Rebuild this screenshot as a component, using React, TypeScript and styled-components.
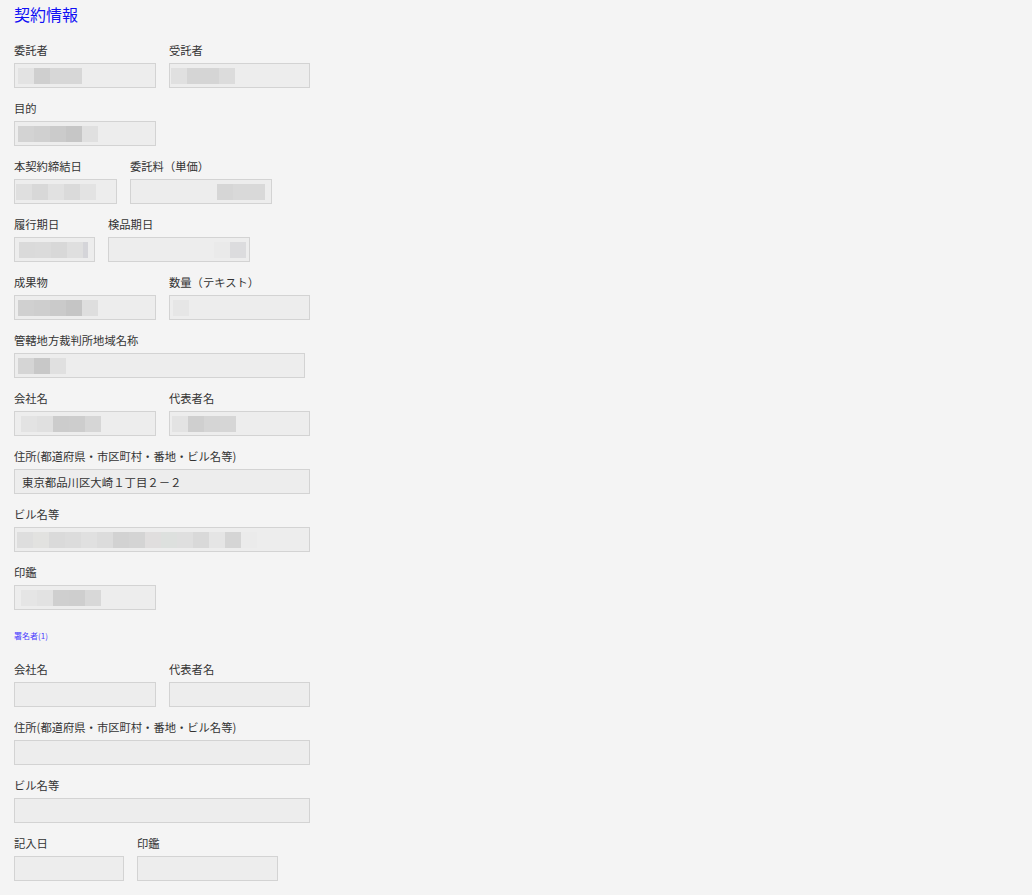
import React from "react";
import styled, { createGlobalStyle } from "styled-components";

const GlobalStyle = createGlobalStyle`
  html, body {
    margin: 0;
    padding: 0;
    background: #f4f4f4;
  }
  body {
    min-height: 100vh;
    font-family: "Noto Sans CJK JP", "Noto Sans", sans-serif;
    color: #333;
  }
`;

const Page = styled.div`
  padding: 2px 14px 12px;
`;

const Title = styled.h1`
  margin: 0 0 16px;
  font-size: 16px;
  line-height: 24px;
  font-weight: normal;
  color: #1010f4;
`;

const SubTitle = styled.div`
  margin: 20px 0 19px;
  font-size: 8px;
  line-height: 12px;
  color: #4a3cff;
`;

const Row = styled.div`
  display: flex;
  gap: 13px;
  margin-bottom: 12px;
`;

const Field = styled.div<{ $w: number }>`
  display: flex;
  flex-direction: column;
  width: ${(p) => p.$w}px;
`;

const Label = styled.div`
  font-size: 11.3px;
  line-height: 16px;
  margin-bottom: 5px;
  white-space: nowrap;
`;

const Box = styled.div<{ $right?: boolean; $inset: number }>`
  box-sizing: border-box;
  height: 25px;
  border: 1px solid #d3d3d3;
  background: #ededed;
  display: flex;
  align-items: center;
  justify-content: ${(p) => (p.$right ? "flex-end" : "flex-start")};
  padding: ${(p) => (p.$right ? `0 ${p.$inset - 1}px 0 0` : `0 0 0 ${p.$inset - 1}px`)};
  font-size: 11.4px;
  color: #333;
  overflow: hidden;
`;

const Block = styled.span<{ $c: string; $w?: number }>`
  flex: none;
  width: ${(p) => p.$w ?? 16}px;
  height: 16px;
  background: ${(p) => p.$c};
`;

const BoxText = styled.span`
  padding-left: 4px;
  white-space: nowrap;
`;

type Cell = string | { c: string; w: number };

type FieldDef = {
  label: string;
  w: number;
  inset?: number;
  right?: boolean;
  blocks?: Cell[];
  text?: string;
};

const rows: FieldDef[][] = [
  [
    { label: "委託者", w: 142, inset: 4, blocks: ["#e3e3e3", "#cfcfcf", "#d7d7d7", "#d7d7d7"] },
    { label: "受託者", w: 141, inset: 2, blocks: ["#e0e0e0", "#d5d5d5", "#d5d5d5", "#dcdcdc"] },
  ],
  [{ label: "目的", w: 142, inset: 4, blocks: ["#d3d3d3", "#d0d0d0", "#cbcbcb", "#c6c6c6", "#e0e0e0"] }],
  [
    { label: "本契約締結日", w: 103, inset: 2, blocks: ["#dfdfdf", "#d8d8d8", "#e1e1e1", "#dadada", "#e3e3e3"] },
    { label: "委託料（単価）", w: 142, inset: 7, right: true, blocks: ["#d6d6d6", "#d9d9d9", "#d9d9d9"] },
  ],
  [
    {
      label: "履行期日",
      w: 81,
      inset: 5,
      blocks: ["#dadada", "#dbdbdb", "#d8d8d8", "#dfdfdf", { c: "#d5d5d9", w: 5 }],
    },
    { label: "検品期日", w: 142, inset: 4, right: true, blocks: ["#eaeaea", "#dcdcde"] },
  ],
  [
    { label: "成果物", w: 142, inset: 4, blocks: ["#d0d0d0", "#cecece", "#cacaca", "#c5c5c5", "#dedede"] },
    { label: "数量（テキスト）", w: 141, inset: 4, blocks: ["#e6e6e6"] },
  ],
  [{ label: "管轄地方裁判所地域名称", w: 291, inset: 4, blocks: ["#d5d5d5", "#c8c8c8", "#e0e0e0"] }],
  [
    { label: "会社名", w: 142, inset: 7, blocks: ["#e3e3e3", "#e0e0e0", "#cccccc", "#cdcdcd", "#d6d6d6"] },
    { label: "代表者名", w: 141, inset: 3, blocks: ["#e3e3e3", "#cfcfcf", "#d5d5d5", "#d6d6d6"] },
  ],
  [{ label: "住所(都道府県・市区町村・番地・ビル名等)", w: 296, inset: 4, text: "東京都品川区大崎１丁目２－２" }],
  [
    {
      label: "ビル名等",
      w: 296,
      inset: 3,
      blocks: [
        "#dedede", "#e2e2e0", "#dadada", "#dcdcdc", "#e0e0e0", "#dcdcdc", "#d2d2d2", "#d4d4d4",
        "#e0dede", "#dde0de", "#dfdfdf", "#d9d9d9", "#e5e5e5", "#d5d5d5", "#ebebeb",
      ],
    },
  ],
  [{ label: "印鑑", w: 142, inset: 7, blocks: ["#e5e5e5", "#e2e2e2", "#cfcfcf", "#cecece", "#d8d8d8"] }],
];

const signerRows: FieldDef[][] = [
  [
    { label: "会社名", w: 142 },
    { label: "代表者名", w: 141 },
  ],
  [{ label: "住所(都道府県・市区町村・番地・ビル名等)", w: 296 }],
  [{ label: "ビル名等", w: 296 }],
  [
    { label: "記入日", w: 110 },
    { label: "印鑑", w: 141 },
  ],
];

const FormField: React.FC<{ f: FieldDef }> = ({ f }) => (
  <Field $w={f.w}>
    <Label>{f.label}</Label>
    <Box $right={f.right} $inset={f.inset ?? 4}>
      {f.text && <BoxText>{f.text}</BoxText>}
      {f.blocks?.map((b, i) =>
        typeof b === "string" ? <Block key={i} $c={b} /> : <Block key={i} $c={b.c} $w={b.w} />
      )}
    </Box>
  </Field>
);

const renderRows = (list: FieldDef[][]) =>
  list.map((r, i) => (
    <Row key={i}>
      {r.map((f, j) => (
        <FormField key={j} f={f} />
      ))}
    </Row>
  ));

const App: React.FC = () => (
  <>
    <GlobalStyle />
    <Page>
      <Title>契約情報</Title>
      {renderRows(rows)}
      <SubTitle>署名者(1)</SubTitle>
      {renderRows(signerRows)}
    </Page>
  </>
);

export default App;
